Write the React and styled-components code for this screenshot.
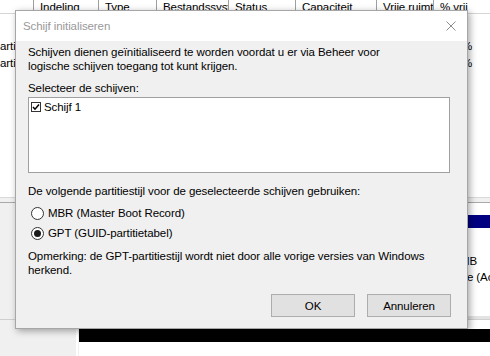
import React from 'react';
import styled, { createGlobalStyle } from 'styled-components';

const GlobalStyle = createGlobalStyle`
  html, body {
    margin: 0;
    padding: 0;
  }
  body {
    width: 490px;
    height: 356px;
    overflow: hidden;
    background: #f0f0f0;
    font-family: "Liberation Sans", Arial, sans-serif;
    font-size: 11.5px;
    letter-spacing: -0.08px;
    color: #000;
  }
`;

const columns = [
  { w: 34, label: '' },
  { w: 65, label: 'Indeling' },
  { w: 58, label: 'Type' },
  { w: 72, label: 'Bestandssysteem' },
  { w: 67, label: 'Status' },
  { w: 81, label: 'Capaciteit' },
  { w: 57, label: 'Vrije ruimte' },
  { w: 120, label: '% vrij' },
];

const volumes = [
  ['artitie', '', '', '', '', '', '', '100 %'],
  ['artitie', '', '', '', '', '', '', '100 %'],
];

function App() {
  return (
    <>
      <GlobalStyle />
      <Desktop>
        <VolumeList>
          <HeaderRow>
            {columns.map((c, i) => (
              <HeaderCell key={i} $w={c.w}>{c.label}</HeaderCell>
            ))}
          </HeaderRow>
          <Rows>
            {volumes.map((row, r) => (
              <VolumeRow key={r}>
                {row.map((v, i) => (
                  <VolumeCell key={i} $w={columns[i].w} $pad={i === 0 ? 0 : 6}>{v}</VolumeCell>
                ))}
              </VolumeRow>
            ))}
          </Rows>
        </VolumeList>
        <Splitter />
        <DiskPane>
          <DiskRow $h={116}>
            <DiskLabel />
            <Partitions>
              <Partition $w={354} $stripe="#000080" $top={12} />
              <Partition $stripe="#000080" $top={12}>
                <PartText>549 MB</PartText>
                <PartText>In orde (Actief, Primaire partitie)</PartText>
              </Partition>
            </Partitions>
          </DiskRow>
          <DiskRow $h={60}>
            <DiskLabel />
            <Partitions>
              <Partition $stripe="#000" $top={9} />
            </Partitions>
          </DiskRow>
        </DiskPane>

        <Dialog>
          <TitleBar>
            <Title>Schijf initialiseren</Title>
            <CloseButton aria-label="Sluiten">
              <svg width="10" height="10" viewBox="0 0 10 10">
                <path d="M0.5 0.5 L9.5 9.5 M9.5 0.5 L0.5 9.5" stroke="#8c8c8c" strokeWidth="1" fill="none" />
              </svg>
            </CloseButton>
          </TitleBar>
          <Body>
            <Text>
              Schijven dienen geïnitialiseerd te worden voordat u er via Beheer voor
              <br />
              logische schijven toegang tot kunt krijgen.
            </Text>
            <Text $mt={8}>Selecteer de schijven:</Text>
            <ListBox>
              <ListItem>
                <CheckBox>
                  <svg width="10" height="10" viewBox="0 0 10 10">
                    <rect x="0.5" y="0.5" width="9" height="9" fill="#fff" stroke="#333" />
                    <path d="M2 5 L4 7.2 L8 2.6" stroke="#000" strokeWidth="1.5" fill="none" />
                  </svg>
                </CheckBox>
                Schijf 1
              </ListItem>
            </ListBox>
            <Text $mt={11}>De volgende partitiestijl voor de geselecteerde schijven gebruiken:</Text>
            <RadioGroup>
              <RadioRow>
                <Radio />
                MBR (Master Boot Record)
              </RadioRow>
              <RadioRow>
                <Radio $checked />
                GPT (GUID-partitietabel)
              </RadioRow>
            </RadioGroup>
            <Text $mt={6}>
              Opmerking: de GPT-partitiestijl wordt niet door alle vorige versies van Windows
              <br />
              herkend.
            </Text>
            <Footer>
              <Button>OK</Button>
              <Button>Annuleren</Button>
            </Footer>
          </Body>
        </Dialog>
      </Desktop>
    </>
  );
}

const Desktop = styled.div`
  position: relative;
  width: 490px;
  height: 356px;
  overflow: hidden;
  display: flex;
  flex-direction: column;
  background: #f0f0f0;
`;

const VolumeList = styled.div`
  height: 197px;
  flex: none;
  background: #fff;
  display: flex;
  flex-direction: column;
`;

const HeaderRow = styled.div`
  display: flex;
  height: 13px;
  border-bottom: 1px solid #d5d5d5;
  overflow: hidden;
`;

const HeaderCell = styled.div`
  width: ${(p) => p.$w}px;
  flex: none;
  box-sizing: border-box;
  padding-left: 6px;
  border-right: 1px solid #a0a0a0;
  line-height: 14px;
  white-space: nowrap;
  overflow: hidden;
`;

const Rows = styled.div`
  padding-top: 23px;
  display: flex;
  flex-direction: column;
`;

const VolumeRow = styled.div`
  display: flex;
  height: 17px;
  align-items: center;
`;

const VolumeCell = styled.div`
  width: ${(p) => p.$w}px;
  flex: none;
  box-sizing: border-box;
  padding-left: ${(p) => p.$pad}px;
  white-space: nowrap;
  overflow: hidden;
`;

const Splitter = styled.div`
  height: 4px;
  flex: none;
  border-top: 1px solid #d9d9d9;
  border-bottom: 1px solid #a9a9a9;
  background: #f0f0f0;
`;

const DiskPane = styled.div`
  flex: 1;
  display: flex;
  flex-direction: column;
  background: #f0f0f0;
`;

const DiskRow = styled.div`
  height: ${(p) => p.$h}px;
  flex: none;
  display: flex;
  border-bottom: 1px solid #cfcfcf;
`;

const DiskLabel = styled.div`
  width: 76px;
  flex: none;
  border-right: 2px solid #fff;
  background: #f0f0f0;
`;

const Partitions = styled.div`
  flex: 1;
  display: flex;
  padding-left: 1px;
`;

const Partition = styled.div`
  ${(p) => (p.$w ? `width: ${p.$w}px; flex: none;` : 'flex: 1;')}
  box-sizing: border-box;
  background: #fff;
  padding: ${(p) => p.$top + 13 + 25}px 0 0 5px;
  position: relative;
  border-bottom: 3px solid #e3e3e3;

  &::before {
    content: '';
    position: absolute;
    left: 0;
    right: 0;
    top: ${(p) => p.$top}px;
    height: 13px;
    background: ${(p) => p.$stripe};
  }
`;

const PartText = styled.div`
  line-height: 16px;
  white-space: nowrap;
`;

const Dialog = styled.div`
  position: absolute;
  left: 15px;
  top: 10px;
  width: 453px;
  height: 319px;
  box-sizing: border-box;
  background: #f0f0f0;
  border: 1px solid #a6a6a6;
  box-shadow: 2px 2px 7px rgba(0, 0, 0, 0.35);
  display: flex;
  flex-direction: column;
`;

const TitleBar = styled.div`
  height: 30px;
  flex: none;
  background: #fff;
  display: flex;
  align-items: center;
  justify-content: space-between;
  padding: 0 11px 0 7px;
`;

const Title = styled.span`
  color: #999;
`;

const CloseButton = styled.span`
  display: flex;
  width: 10px;
  height: 10px;
`;

const Body = styled.div`
  flex: 1;
  display: flex;
  flex-direction: column;
  padding: 4px 16px 11px 12px;
`;

const Text = styled.div`
  line-height: 14px;
  margin-top: ${(p) => p.$mt || 0}px;
  white-space: nowrap;
`;

const ListBox = styled.div`
  margin-top: 2px;
  margin-right: 1px;
  height: 76px;
  box-sizing: border-box;
  background: #fff;
  border: 1px solid #a0a0a0;
  padding: 2px 2px;
`;

const ListItem = styled.div`
  display: flex;
  align-items: center;
  gap: 3px;
  line-height: 14px;
`;

const CheckBox = styled.span`
  display: flex;
  width: 10px;
  height: 10px;
`;

const RadioGroup = styled.div`
  margin-top: 5px;
  display: flex;
  flex-direction: column;
`;

const RadioRow = styled.div`
  height: 20px;
  display: flex;
  align-items: center;
  gap: 4px;
  padding-left: 3px;
`;

const Radio = styled.span`
  width: 13px;
  height: 13px;
  box-sizing: border-box;
  border-radius: 50%;
  border: 1px solid #333;
  background: #fff;
  display: flex;
  align-items: center;
  justify-content: center;

  &::after {
    content: '';
    width: 7px;
    height: 7px;
    border-radius: 50%;
    background: ${(p) => (p.$checked ? '#1a1a1a' : 'transparent')};
  }
`;

const Footer = styled.div`
  margin-top: auto;
  display: flex;
  justify-content: flex-end;
  gap: 12px;
`;

const Button = styled.div`
  width: 84px;
  height: 23px;
  box-sizing: border-box;
  background: #e1e1e1;
  border: 1px solid #adadad;
  display: flex;
  align-items: center;
  justify-content: center;
`;

export default App;
